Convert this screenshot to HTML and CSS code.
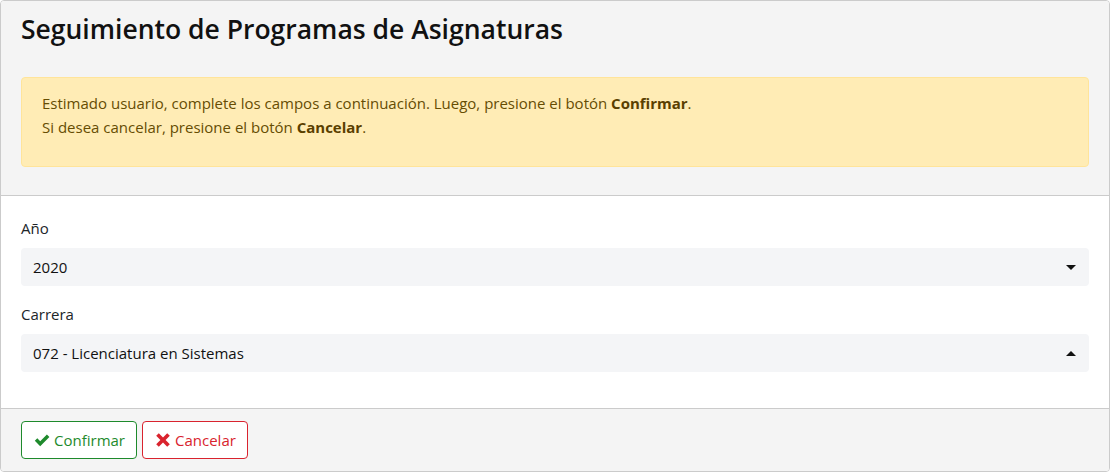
FILE: index.html
```html
<!DOCTYPE html>
<html lang="es">
<head>
<meta charset="utf-8">
<title>Seguimiento de Programas de Asignaturas</title>
<link rel="stylesheet" href="styles.css">
</head>
<body>
<div class="card">
  <div class="card-header">
    <h1 class="title">Seguimiento de Programas de Asignaturas</h1>
    <div class="alert">
      <p>Estimado usuario, complete los campos a continuación. Luego, presione el botón <strong>Confirmar</strong>.<br>
      Si desea cancelar, presione el botón <strong>Cancelar</strong>.</p>
    </div>
  </div>
  <div class="card-body">
    <div class="field">
      <label class="label">Año</label>
      <div class="select">
        <span>2020</span>
        <span class="caret caret-down"></span>
      </div>
    </div>
    <div class="field">
      <label class="label">Carrera</label>
      <div class="select">
        <span>072 - Licenciatura en Sistemas</span>
        <span class="caret caret-up"></span>
      </div>
    </div>
  </div>
  <div class="card-footer">
    <button class="btn btn-ok" type="button">
      <svg class="icon" viewBox="0 0 16 16" width="16" height="16"><path d="M0.8 8.8 L3.3 6.3 L6.2 9.2 L12.9 2.5 L15.4 5 L6.2 14.2 Z" fill="#1e8a2c"/></svg>
      Confirmar
    </button>
    <button class="btn btn-cancel" type="button">
      <svg class="icon" viewBox="0 0 16 16" width="16" height="16"><path d="M1.2 3.8 L3.8 1.2 L8 5.4 L12.2 1.2 L14.8 3.8 L10.6 8 L14.8 12.2 L12.2 14.8 L8 10.6 L3.8 14.8 L1.2 12.2 L5.4 8 Z" fill="#d9232e"/></svg>
      Cancelar
    </button>
  </div>
</div>
</body>
</html>
```
FILE: styles.css
```css
* { box-sizing: border-box; }
html, body { margin: 0; padding: 0; background: #ffffff; }
body {
  font-family: "Open Sans", "Noto Sans", sans-serif;
  font-size: 15px;
  color: #212529;
  width: 1111px;
}
.card {
  width: 1110px;
  border: 1px solid #cbcbcb;
  border-radius: 4px;
  overflow: hidden;
}
.card-header {
  background: #f4f4f4;
  padding: 13px 20px 28px;
  border-bottom: 1px solid #cbcbcb;
}
.title {
  margin: 0 0 32px;
  font-size: 26.5px;
  line-height: 31px;
  font-weight: 600;
  color: #111;
}
.alert {
  background: #ffecb5;
  border: 1px solid #ffe49a;
  border-radius: 4px;
  padding: 13px 20px 14px;
  color: #664d03;
  height: 90px;
}
.alert p { margin: 0; line-height: 24px; }
.alert strong { font-weight: 700; color: #5a3f00; }
.card-body {
  background: #fff;
  padding: 20px 20px 20px;
}
.field { margin-bottom: 16px; }
.label {
  display: block;
  line-height: 24px;
  margin-bottom: 8px;
  color: #212529;
}
.select {
  height: 38px;
  background: #f4f5f7;
  border-radius: 4px;
  display: flex;
  align-items: center;
  justify-content: space-between;
  padding: 0 13px 0 12px;
  color: #111;
}
.caret {
  width: 0; height: 0;
  border-left: 5px solid transparent;
  border-right: 5px solid transparent;
}
.caret-down { border-top: 5px solid #111; }
.caret-up { border-bottom: 5px solid #111; }
.card-footer {
  background: #f4f4f4;
  border-top: 1px solid #cbcbcb;
  padding: 12px 20px 12px;
  display: flex;
  gap: 5px;
}
.btn {
  height: 38px;
  background: #fff;
  border-radius: 4px;
  font-family: inherit;
  font-size: 15px;
  padding: 0 11px 0 12px;
  display: inline-flex;
  align-items: center;
  gap: 4px;
  cursor: pointer;
}
.btn-ok { border: 1px solid #1e8a2c; color: #1e8a2c; }
.btn-cancel { border: 1px solid #d9232e; color: #d9232e; }
.icon { display: block; }
```
